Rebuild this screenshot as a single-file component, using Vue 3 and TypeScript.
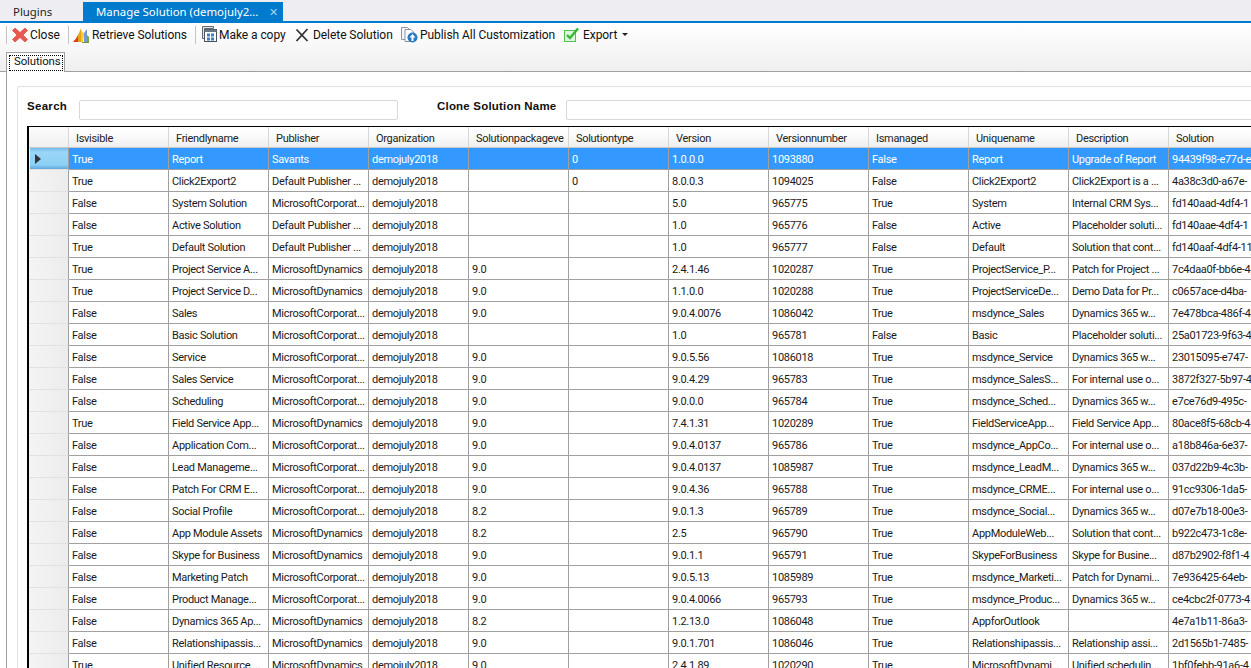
<script setup lang="ts">
const columns: string[] = ['Isvisible','Friendlyname','Publisher','Organization','Solutionpackageve','Solutiontype','Version','Versionnumber','Ismanaged','Uniquename','Description','Solution']
const d = 'demojuly2018'
const mc = 'MicrosoftCorporat...'
const md = 'MicrosoftDynamics'
const rows: string[][] = [
['True','Report','Savants',d,'','0','1.0.0.0','1093880','False','Report','Upgrade of Report','94439f98-e77d-e'],
['True','Click2Export2','Default Publisher ...',d,'','0','8.0.0.3','1094025','False','Click2Export2','Click2Export is a ...','4a38c3d0-a67e-'],
['False','System Solution',mc,d,'','','5.0','965775','True','System','Internal CRM Sys...','fd140aad-4df4-1'],
['False','Active Solution','Default Publisher ...',d,'','','1.0','965776','False','Active','Placeholder soluti...','fd140aae-4df4-1'],
['True','Default Solution','Default Publisher ...',d,'','','1.0','965777','False','Default','Solution that cont...','fd140aaf-4df4-11'],
['True','Project Service A...',md,d,'9.0','','2.4.1.46','1020287','True','ProjectService_P...','Patch for Project ...','7c4daa0f-bb6e-4'],
['True','Project Service D...',md,d,'9.0','','1.1.0.0','1020288','True','ProjectServiceDe...','Demo Data for Pr...','c0657ace-d4ba-'],
['False','Sales',mc,d,'9.0','','9.0.4.0076','1086042','True','msdynce_Sales','Dynamics 365 w...','7e478bca-486f-4'],
['False','Basic Solution',mc,d,'','','1.0','965781','False','Basic','Placeholder soluti...','25a01723-9f63-4'],
['False','Service',mc,d,'9.0','','9.0.5.56','1086018','True','msdynce_Service','Dynamics 365 w...','23015095-e747-'],
['False','Sales Service',mc,d,'9.0','','9.0.4.29','965783','True','msdynce_SalesS...','For internal use o...','3872f327-5b97-4'],
['False','Scheduling',mc,d,'9.0','','9.0.0.0','965784','True','msdynce_Sched...','Dynamics 365 w...','e7ce76d9-495c-'],
['True','Field Service App...',md,d,'9.0','','7.4.1.31','1020289','True','FieldServiceApp...','Field Service App...','80ace8f5-68cb-4'],
['False','Application Com...',mc,d,'9.0','','9.0.4.0137','965786','True','msdynce_AppCo...','For internal use o...','a18b846a-6e37-'],
['False','Lead Manageme...',mc,d,'9.0','','9.0.4.0137','1085987','True','msdynce_LeadM...','Dynamics 365 w...','037d22b9-4c3b-'],
['False','Patch For CRM E...',mc,d,'9.0','','9.0.4.36','965788','True','msdynce_CRME...','For internal use o...','91cc9306-1da5-'],
['False','Social Profile',mc,d,'8.2','','9.0.1.3','965789','True','msdynce_Social...','Dynamics 365 w...','d07e7b18-00e3-'],
['False','App Module Assets',md,d,'8.2','','2.5','965790','True','AppModuleWeb...','Solution that cont...','b922c473-1c8e-'],
['False','Skype for Business',md,d,'9.0','','9.0.1.1','965791','True','SkypeForBusiness','Skype for Busine...','d87b2902-f8f1-4'],
['False','Marketing Patch',mc,d,'9.0','','9.0.5.13','1085989','True','msdynce_Marketi...','Patch for Dynami...','7e936425-64eb-'],
['False','Product Manage...',mc,d,'9.0','','9.0.4.0066','965793','True','msdynce_Produc...','Dynamics 365 w...','ce4cbc2f-0773-4'],
['False','Dynamics 365 Ap...',md,d,'8.2','','1.2.13.0','1086048','True','AppforOutlook','','4e7a1b11-86a3-'],
['False','Relationshipassis...',md,d,'9.0','','9.0.1.701','1086046','True','Relationshipassis...','Relationship assi...','2d1565b1-7485-'],
['True','Unified Resource ...',md,d,'9.0','','2.4.1.89','1020290','True','MicrosoftDynami...','Unified schedulin...','1bf0febb-91a6-4'],
]
</script>

<template>
  <div class="app">
    <div class="docbar">
      <div class="doc">Plugins</div>
      <div class="doc active"><span>Manage Solution (demojuly2...</span><span class="docx">✕</span></div>
    </div>
    <div class="toolbar">
      <i class="sep"></i>
      <div class="tool t-close">
        <svg width="16" height="16" viewBox="0 0 16 16"><path d="M3 1 8 5.500 13 1 15.500 3.500 11 8l4.500 4.500-2.500 2.500L8 10.500 3 15 .5 12.500 5 8 .5 3.500z" fill="#e8584c" stroke="#d9534a" stroke-width=".8"/></svg>
        <span>Close</span>
      </div>
      <i class="sep"></i>
      <div class="tool t-retrieve">
        <svg width="17" height="16" viewBox="0 0 17 16"><path d="M0 15C3 12 6 7 8 1v14z" fill="#e8a317"/><path d="M0 15C2 13 4 11 5 8v7z" fill="#d8401c"/><path d="M8 15V3l3 4-1 8z" fill="#f2c83c"/><path d="M11 15V6l3-4v13z" fill="#6f9bd1"/><path d="M14 15V8l2 2v5z" fill="#7aa83c"/><path d="M9 15h7v1H9z" fill="#6c9a34"/></svg>
        <span>Retrieve Solutions</span>
      </div>
      <i class="sep"></i>
      <div class="tool t-copy">
        <svg width="16" height="17" viewBox="0 0 16 17"><path d="M.5.500h11v2h-9v10h-2z" fill="#e6e6e6" stroke="#5b6672"/><rect x="2.500" y="3.500" width="12" height="12" fill="#fff" stroke="#46525e"/><rect x="2.500" y="3.500" width="12" height="2.500" fill="#6a7682"/><path d="M5 7.500h3v3H5zM9 7.500h3v3H9zM5 11.500h3v3H5zM9 11.500h3v3H9z" fill="#3f7fc4"/></svg>
        <span>Make a copy</span>
      </div>
      <div class="tool t-delete">
        <svg width="14" height="14" viewBox="0 0 14 14"><path d="M1.500 1.500 12.500 13M12.500 1 1.500 13" stroke="#333" stroke-width="1.800" fill="none"/></svg>
        <span>Delete Solution</span>
      </div>
      <div class="tool t-publish">
        <svg width="17" height="17" viewBox="0 0 17 17"><path d="M.5 1.500h6l2 2v10h-8z" fill="#f4f6f9" stroke="#8a94a3"/><path d="M4 3.500h6l2.500 2.500v9.500H4z" fill="#fff" stroke="#8a94a3"/><circle cx="11.500" cy="11.500" r="5" fill="#2b78c5"/><path d="M11.500 8 8.500 11.500h2V15h2v-3.500h2z" fill="#fff"/></svg>
        <span>Publish All Customization</span>
      </div>
      <div class="tool t-export">
        <svg width="16" height="15" viewBox="0 0 16 15"><rect x=".5" y="3.500" width="11" height="11" fill="#dff5df" stroke="#52c04f"/><path d="M3 8 6 11 14 1.500" stroke="#35b534" stroke-width="2.400" fill="none"/></svg>
        <span>Export</span>
        <i class="caret"></i>
      </div>
    </div>
    <div class="tabstrip">
      <div class="tab"><span>Solutions</span></div>
    </div>
    <div class="page">
      <div class="group">
        <div class="searchrow">
          <label class="lbl l1">Search</label>
          <div class="field f1"></div>
          <label class="lbl clone">Clone Solution Name</label>
          <div class="field f2"></div>
        </div>
        <div class="grid">
          <div class="hrow">
            <div class="corner"></div>
            <div v-for="c in columns" :key="c" class="hcell">{{ c }}</div>
          </div>
          <div v-for="(r, i) in rows" :key="i" class="row" :class="{ sel: i === 0 }">
            <div class="rhead">
              <svg v-if="i === 0" class="arrow" width="6" height="10" viewBox="0 0 6 10"><path d="M0 0 6 5 0 10z" fill="#333"/></svg>
            </div>
            <div v-for="(v, j) in r" :key="j" class="cell">{{ v }}</div>
          </div>
        </div>
      </div>
    </div>
  </div>
</template>

<style>
html, body { margin: 0; overflow: hidden; background: #fff; }
</style>

<style scoped>
.app {
  width: 1251px;
  height: 668px;
  overflow: hidden;
  display: flex;
  flex-direction: column;
  font-family: Roboto, "Liberation Sans", sans-serif;
  font-size: 11px;
  letter-spacing: -.3px;
  color: #111;
  background: #fff;
}
.docbar {
  height: 21px;
  flex: none;
  display: flex;
  align-items: flex-end;
  background: #eeeef2;
  border-bottom: 2px solid #007acc;
}
.doc {
  width: 83px;
  height: 19px;
  box-sizing: border-box;
  padding: 2px 0 0 13px;
  font-family: "Noto Sans", sans-serif;
  font-size: 11.400px;
  letter-spacing: 0;
  line-height: 15px;
  color: #1e1e1e;
}
.doc.active {
  width: 200px;
  background: #007acc;
  color: #fff;
  display: flex;
  justify-content: space-between;
  padding-right: 5px;
}
.docx { font-size: 11px; color: #a9d3ee; }
.toolbar {
  height: 23px;
  flex: none;
  display: flex;
  align-items: center;
  padding-left: 6px;
  background: linear-gradient(#ffffff, #f8f8f8);
  font-family: Roboto, sans-serif;
  font-size: 12px;
  letter-spacing: -.06px;
}
.sep { width: 1px; height: 18px; background: #c4c4c4; flex: none; }
.tool { display: flex; align-items: center; white-space: nowrap; color: #111; }
.t-close { margin-left: 5px; }
.t-close span { margin-left: 2px; width: 38px; }
.t-retrieve { margin-left: 4px; }
.t-retrieve span { margin-left: 2px; width: 103px; }
.t-copy { margin-left: 6px; }
.t-copy span { margin-left: 1px; width: 76px; }
.t-delete span { margin-left: 4px; width: 88px; }
.t-publish span { margin-left: 2px; width: 144px; }
.t-export span { margin-left: 3px; }
.caret {
  width: 0; height: 0; margin-left: 5px;
  border-left: 3px solid transparent; border-right: 3px solid transparent; border-top: 3px solid #222;
}
.tabstrip {
  height: 26px;
  flex: none;
  box-sizing: border-box;
  padding: 5px 0 0 6px;
  background: linear-gradient(#f8f8f8, #efefef);
  border-bottom: 1px solid #a0a0a0;
  display: flex;
  align-items: flex-end;
}
.tab {
  width: 59px;
  height: 20px;
  box-sizing: border-box;
  margin-bottom: -1px;
  background: #fff;
  border: 1px solid #a0a0a0;
  border-bottom: none;
  padding: 2px 0 0 2px;
  font-size: 11.400px;
  letter-spacing: -.1px;
  line-height: 11px;
}
.tab span { display: block; width: 54px; height: 16px; border: 1px dotted #000; padding-left: 4px; box-sizing: border-box; white-space: nowrap; }
.page {
  flex: 1;
  min-height: 0;
  margin-left: 6px;
  border-left: 1px solid #a0a0a0;
  padding: 14px 0 0 10px;
  background: #fff;
}
.group {
  height: 100%;
  box-sizing: border-box;
  border: 1px solid #dce2e8;
  border-right: none;
  border-bottom: none;
  border-top-left-radius: 3px;
  padding: 13px 0 0 9px;
}
.searchrow { display: flex; align-items: flex-start; height: 20px; margin-bottom: 6px; }
.lbl { font-weight: 700; font-family: "Liberation Sans", sans-serif; font-size: 11.500px; line-height: 13px; color: #111; white-space: nowrap; }
.l1 { width: 52px; flex: none; letter-spacing: .3px; }
.field { height: 20px; box-sizing: border-box; border: 1px solid #d9d9d9; border-radius: 2px; background: #fff; flex: none; }
.f1 { width: 319px; }
.clone { margin-left: 39px; width: 129px; flex: none; letter-spacing: .2px; }
.f2 { width: 700px; margin-left: 0; }
.grid {
  width: 1300px;
  border-top: 1px solid #000;
  border-left: 2px solid #000;
}
.hrow { display: flex; height: 21px; box-sizing: border-box; border-bottom: 1px solid #c8c8c8; }
.corner { width: 40px; flex: none; box-sizing: border-box; background: linear-gradient(#fcfcfc, #f0f0f0); border-right: 1px solid #d8d8d8; }
.hcell {
  width: 100px;
  flex: none;
  box-sizing: border-box;
  padding: 3px 0 0 7px;
  line-height: 17px;
  background: linear-gradient(#ffffff 0, #fbfbfb 45%, #eeeeee 100%);
  border-right: 1px solid #d8d8d8;
  white-space: nowrap;
  overflow: hidden;
  color: #222;
}
.row { display: flex; height: 22px; }
.rhead {
  width: 40px;
  flex: none;
  box-sizing: border-box;
  background: linear-gradient(90deg, #f4f4f4, #ececec);
  border-right: 1px solid #a0a0a0;
  border-bottom: 1px solid #e2e2e2;
  position: relative;
}
.row.sel .rhead { background: linear-gradient(#74bdea, #9ad6f7 20%, #8dd0f5 80%, #60a8d8); border-left: 1px solid #f4f4f4; }
.arrow { position: absolute; left: 5px; top: 6px; }
.cell {
  width: 100px;
  flex: none;
  box-sizing: border-box;
  padding: 2px 0 0 3px;
  line-height: 19px;
  border-right: 1px solid #a0a0a0;
  border-bottom: 1px solid #a0a0a0;
  white-space: nowrap;
  overflow: hidden;
  color: #1a1a1a;
  background: #fff;
}
.row.sel .cell { background: #3399ff; color: #fff; }
</style>
